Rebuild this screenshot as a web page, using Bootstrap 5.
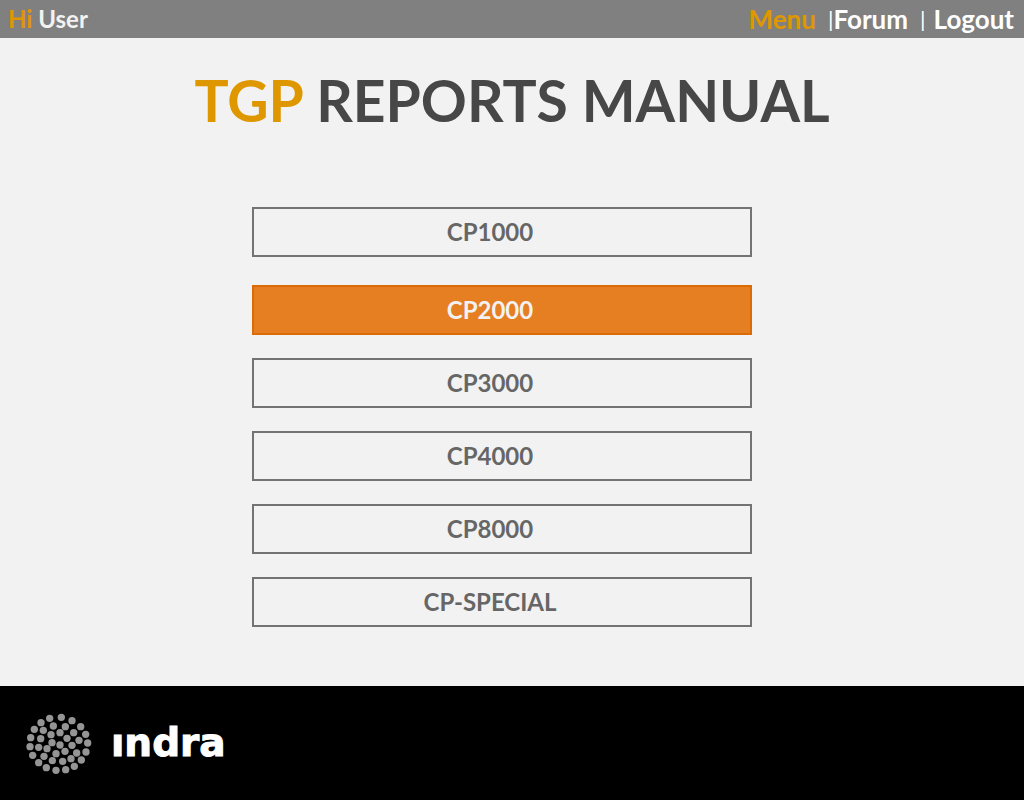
<!DOCTYPE html>
<html lang="en">
<head>
<meta charset="utf-8">
<meta name="viewport" content="width=device-width, initial-scale=1">
<title>TGP Reports Manual</title>
<link href="https://cdn.jsdelivr.net/npm/bootstrap@5.3.0/dist/css/bootstrap.min.css" rel="stylesheet">
<style>
  body { background: #f2f2f2; font-family: Lato, "Liberation Sans", sans-serif; }
  .topbar { background: #808080; color: #fff; height: 38px; padding: 0 10px 0 8px; font-size: 24px; line-height: 38px; }
  .topbar nav { font-size: 26px; }
  .topbar .divider { font-size: 22px; font-weight: 400; }
  .accent { color: #df9700; }
  .user-name { color: #f2f2f2; }
  .report-title { color: #474747; font-size: 57px; line-height: 72px; margin: 26px 0 71px; word-spacing: normal; }
  .report-list { gap: 23px; width: 520px; max-width: 100%; padding-right: 20px; margin-bottom: 57px; }
  .btn-report {
    --bs-btn-color: #666; --bs-btn-border-color: #737373;
    --bs-btn-hover-color: #f2f2f2; --bs-btn-hover-bg: #e67e22; --bs-btn-hover-border-color: #db6b07;
    --bs-btn-active-color: #f2f2f2; --bs-btn-active-bg: #e67e22; --bs-btn-active-border-color: #db6b07;
    --bs-btn-border-width: 2px; --bs-btn-border-radius: 0;
    height: 50px; padding: 0 24px 0 0; font-size: 24px; line-height: 44px; font-weight: 700;
  }
  .btn-report.active { margin-top: 5px; }
  .brand-bar { background: #000; height: 114px; padding: 0 25px; gap: 18px; }
  .wordmark { color: #fff; font: bold 39px/44px "DejaVu Sans", sans-serif; -webkit-text-stroke: 1px #fff; }
</style>
</head>
<body class="d-flex flex-column min-vh-100">
  <header class="topbar d-flex justify-content-between fw-bold">
    <div><span class="accent">Hi</span> <span class="user-name">User</span></div>
    <nav class="d-flex" aria-label="Main">
      <a href="#" class="accent text-decoration-none me-2">Menu</a>
      <span class="divider ms-1">|</span>
      <a href="#" class="text-white text-decoration-none me-2">Forum</a>
      <span class="divider ms-1 me-2">|</span>
      <a href="#" class="text-white text-decoration-none">Logout</a>
    </nav>
  </header>

  <main class="d-flex flex-column align-items-center">
    <h1 class="report-title fw-bold text-center"><span class="accent">TGP</span> REPORTS MANUAL</h1>
    <div class="report-list d-flex flex-column">
      <button type="button" class="btn btn-report">CP1000</button>
      <button type="button" class="btn btn-report active">CP2000</button>
      <button type="button" class="btn btn-report">CP3000</button>
      <button type="button" class="btn btn-report">CP4000</button>
      <button type="button" class="btn btn-report">CP8000</button>
      <button type="button" class="btn btn-report">CP-SPECIAL</button>
    </div>
  </main>

  <footer class="brand-bar d-flex align-items-center mt-auto">
    <svg width="68" height="64" viewBox="45 94 204 192" fill="#959595" aria-hidden="true">
      <circle cx="119" cy="116" r="11"/><circle cx="154" cy="113" r="11"/><circle cx="186" cy="123" r="11"/>
      <circle cx="93" cy="129" r="11"/><circle cx="130" cy="139" r="11"/><circle cx="166" cy="141" r="11"/>
      <circle cx="212" cy="141" r="11"/><circle cx="73" cy="149" r="11"/><circle cx="100" cy="152" r="11"/>
      <circle cx="123" cy="165" r="11"/><circle cx="150" cy="159" r="11"/><circle cx="191" cy="159" r="11"/>
      <circle cx="227" cy="164" r="11"/><circle cx="62" cy="174" r="11"/><circle cx="92" cy="177" r="11"/>
      <circle cx="171" cy="176" r="11"/><circle cx="207" cy="182" r="11"/><circle cx="126" cy="189" r="11"/>
      <circle cx="150" cy="196" r="11"/><circle cx="186" cy="197" r="11"/><circle cx="233" cy="190" r="11"/>
      <circle cx="60" cy="201" r="11"/><circle cx="86" cy="203" r="11"/><circle cx="111" cy="207" r="11"/>
      <circle cx="165" cy="215" r="11"/><circle cx="138" cy="222" r="11"/><circle cx="200" cy="220" r="11"/>
      <circle cx="228" cy="217" r="11"/><circle cx="68" cy="227" r="11"/><circle cx="102" cy="230" r="11"/>
      <circle cx="183" cy="237" r="11"/><circle cx="214" cy="241" r="11"/><circle cx="86" cy="249" r="11"/>
      <circle cx="127" cy="243" r="11"/><circle cx="158" cy="245" r="11"/><circle cx="193" cy="260" r="11"/>
      <circle cx="109" cy="264" r="11"/><circle cx="138" cy="272" r="11"/><circle cx="167" cy="270" r="11"/>
    </svg>
    <span class="wordmark">ındra</span>
  </footer>
  <script src="https://cdn.jsdelivr.net/npm/bootstrap@5.3.0/dist/js/bootstrap.bundle.min.js"></script>
</body>
</html>
